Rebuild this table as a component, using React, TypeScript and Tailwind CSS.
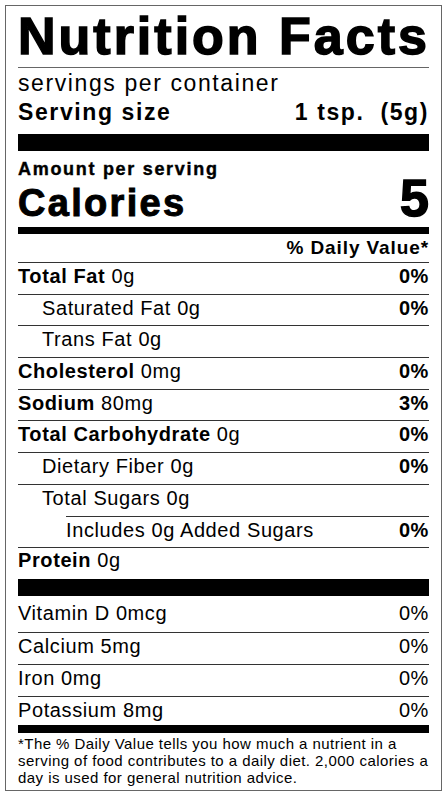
const rows = [
  { bold: "Total Fat", rest: "0g", dv: "0%" },
  { label: "Saturated Fat 0g", dv: "0%", indent: 1 },
  { label: "Trans Fat 0g", indent: 1 },
  { bold: "Cholesterol", rest: "0mg", dv: "0%" },
  { bold: "Sodium", rest: "80mg", dv: "3%" },
  { bold: "Total Carbohydrate", rest: "0g", dv: "0%" },
  { label: "Dietary Fiber 0g", dv: "0%", indent: 1 },
  { label: "Total Sugars 0g", indent: 1 },
  { label: "Includes 0g Added Sugars", dv: "0%", indent: 2 },
];

const vitamins = [
  { label: "Vitamin D 0mcg", dv: "0%" },
  { label: "Calcium 5mg", dv: "0%" },
  { label: "Iron 0mg", dv: "0%" },
  { label: "Potassium 8mg", dv: "0%" },
];

export default function App() {
  return (
    <div className="min-h-screen bg-white p-[5px] font-['Liberation_Sans',Arial,sans-serif] text-black">
      <div className="w-[437px] border border-[#666] px-3 pb-[4px]">
        <h1 className="pt-[4px] text-[52px] leading-[52px] font-bold tracking-[3px] whitespace-nowrap [-webkit-text-stroke:1.5px_#000]">
          Nutrition Facts
        </h1>
        <div className="mt-[5px] h-px bg-[#666]" />

        <div className="pt-px text-[23px] leading-[29px] tracking-[1.6px]">
          servings per container
        </div>
        <div className="flex justify-between text-[23px] leading-[29px] font-bold tracking-[1.6px] whitespace-nowrap">
          <span>Serving size</span>
          <span>1 tsp.&nbsp;&nbsp;(5g)</span>
        </div>
        <div className="mt-[7px] h-[17px] bg-black" />

        <div className="mt-[9px] text-[18px] leading-[18px] font-bold tracking-[1.7px] [-webkit-text-stroke:0.4px_#000]">
          Amount per serving
        </div>
        <div className="flex items-baseline justify-between leading-[40px]">
          <span className="text-[38px] font-bold tracking-[2.3px] [-webkit-text-stroke:1px_#000]">
            Calories
          </span>
          <span className="text-[52px] font-bold [-webkit-text-stroke:1.5px_#000]">5</span>
        </div>
        <div className="mt-[4px] h-[7px] bg-black" />

        <div className="pt-[4px] pb-[4px] text-right text-[19px] leading-[20px] font-bold tracking-[0.9px]">
          % Daily Value*
        </div>

        {rows.map((r, i) => (
          <div
            key={i}
            className={
              "flex h-[31.7px] justify-between border-t border-[#333] text-[20px] leading-[26px] tracking-[0.6px] whitespace-nowrap " +
              (r.indent === 2 ? "ml-12" : "")
            }
          >
            <span className={r.indent === 1 ? "pl-6" : ""}>
              {r.bold ? (
                <>
                  <b>{r.bold}</b> {r.rest}
                </>
              ) : (
                r.label
              )}
            </span>
            {r.dv && <b>{r.dv}</b>}
          </div>
        ))}
        <div className="h-[32px] border-t border-[#333] text-[20px] leading-[24px] tracking-[0.6px]">
          <b>Protein</b> 0g
        </div>
        <div className="h-[17px] bg-black" />

        <div className="pt-[4px]">
          {vitamins.map((v, i) => (
            <div
              key={i}
              className={
                "flex justify-between text-[20px] leading-[26px] tracking-[0.6px] whitespace-nowrap " +
                (i === 0 ? "h-[32px]" : i === 3 ? "h-[29px] border-t border-[#333]" : "h-[31.7px] border-t border-[#333]")
              }
            >
              <span>{v.label}</span>
              <span>{v.dv}</span>
            </div>
          ))}
        </div>
        <div className="h-[8px] bg-black" />

        <p className="mt-[2px] text-[15px] leading-[17px] tracking-[0.45px] whitespace-nowrap">
          *The % Daily Value tells you how much a nutrient in a
          <br />
          serving of food contributes to a daily diet. 2,000 calories a
          <br />
          day is used for general nutrition advice.
        </p>
      </div>
    </div>
  );
}
